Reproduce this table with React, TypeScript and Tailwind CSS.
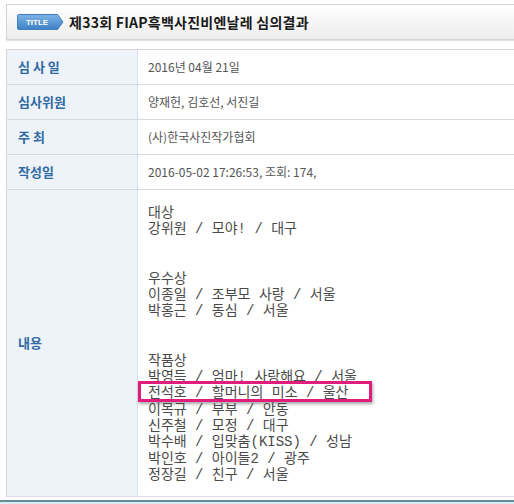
const font = { fontFamily: '"Noto Sans CJK KR", "Noto Sans", sans-serif' };
const monoFont = { fontFamily: '"Liberation Mono", "Noto Sans CJK KR", monospace' };

const rows = [
  { label: '심 사 일', value: '2016년 04월 21일' },
  { label: '심사위원', value: '양재헌, 김호선, 서진길' },
  { label: '주 최', value: '(사)한국사진작가협회' },
  { label: '작성일', value: '2016-05-02 17:26:53, 조회: 174,' },
];

const lines = [
  '대상',
  '강위원 / 모야! / 대구',
  '',
  '',
  '우수상',
  '이종일 / 조부모 사랑 / 서울',
  '박홍근 / 동심 / 서울',
  '',
  '',
  '작품상',
  '박영득 / 엄마! 사랑해요 / 서울',
  '전석호 / 할머니의 미소 / 울산',
  '이목규 / 부부 / 안동',
  '신주철 / 모정 / 대구',
  '박수배 / 입맞춤(KISS) / 성남',
  '박인호 / 아이들2 / 광주',
  '정장길 / 친구 / 서울',
];

function TitleBadge() {
  return (
    <svg width="47" height="16" viewBox="0 0 47 16">
      <defs>
        <linearGradient id="tb" x1="0" y1="0" x2="0" y2="1">
          <stop offset="0" stopColor="#7db4e6" />
          <stop offset="1" stopColor="#3d80c4" />
        </linearGradient>
      </defs>
      <path d="M1.5 0.5 H40.5 L46 8 L40.5 15.5 H1.5 Q0.5 15.5 0.5 14.5 V1.5 Q0.5 0.5 1.5 0.5 Z" fill="url(#tb)" stroke="#3f7fbf" strokeWidth="1" />
      <text x="20" y="11" textAnchor="middle" fill="#fff" fontSize="8" fontWeight="bold" fontFamily="Liberation Sans, Arial, sans-serif">TITLE</text>
    </svg>
  );
}

export default function App() {
  return (
    <div className="w-[514px] h-[504px] overflow-hidden bg-white" style={font}>
      <div className="pt-[4px] pl-[6px]">
        <div className="h-[36px] border border-[#d4d4d4] border-r-0 bg-gradient-to-b from-white to-[#ededed] flex items-center pl-[10px] gap-[5px] shadow-[0_1px_1px_#e4e4e4]">
          <TitleBadge />
          <span className="text-[14px] font-bold text-[#1a1a1a] tracking-[0.25px]">제33회 FIAP흑백사진비엔날레 심의결과</span>
        </div>

        <div className="mt-[9px] border-t border-l border-[#d6d6d6]">
          {rows.map(r => (
            <div key={r.label} className="flex h-[35px] border-b border-[#dadada]">
              <div className="w-[131px] shrink-0 bg-[#eef3f9] border-r border-[#d7dfe8] flex items-center pl-[11px] text-[13px] font-bold text-[#2f6aa3]">
                {r.label}
              </div>
              <div className="flex-1 flex items-center pl-[10px] text-[12px] text-[#555]">{r.value}</div>
            </div>
          ))}
          <div className="flex h-[307px] border-b border-[#e4dde4]">
            <div className="w-[131px] shrink-0 bg-[#eef3f9] border-r border-[#d7dfe8] flex items-center pl-[11px] text-[13px] font-bold text-[#2f6aa3]">
              내용
            </div>
            <div className="flex-1 pl-[10px] pt-[15px] text-[14px] leading-[16.4px] text-[#4a4a4a]" style={monoFont}>
              {lines.map((l, i) => (
                <div key={i} className="relative h-[16.4px] whitespace-pre">
                  {l}
                  {i === 11 && (
                    <div className="absolute left-[-10px] top-[-4px] w-[234px] h-[21px] border-[3px] border-[#e01c7c] shadow-[1px_2px_3px_rgba(0,0,0,0.35)]" />
                  )}
                </div>
              ))}
            </div>
          </div>
        </div>
      </div>
      <div className="mt-[3px] border-t-2 border-[#6a8b96] bg-[#d8eef6] h-[10px]" />
    </div>
  );
}
